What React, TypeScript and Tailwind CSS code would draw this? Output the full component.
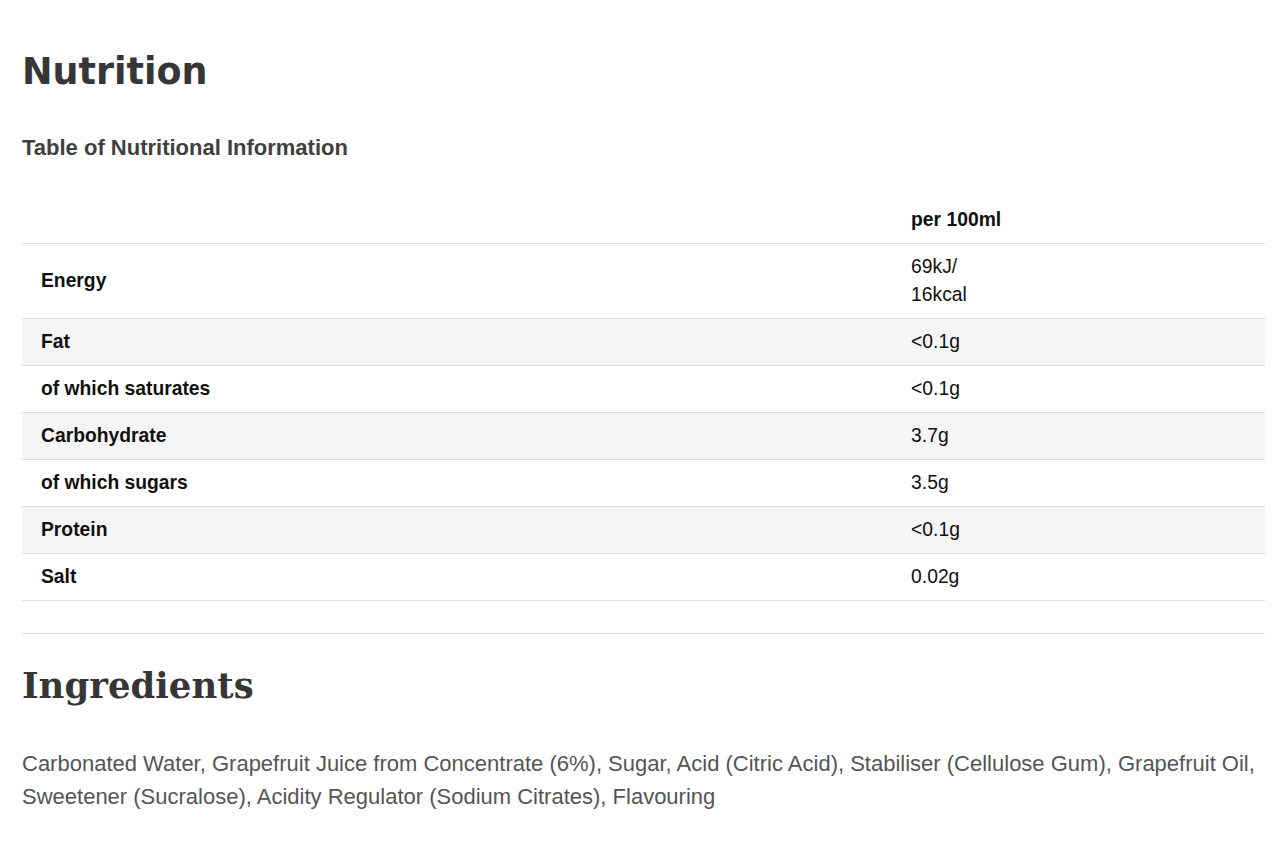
import React from "react";

const rows: { label: string; value: React.ReactNode; shaded: boolean }[] = [
  { label: "Energy", value: (<><div>69kJ/</div><div>16kcal</div></>), shaded: false },
  { label: "Fat", value: "<0.1g", shaded: true },
  { label: "of which saturates", value: "<0.1g", shaded: false },
  { label: "Carbohydrate", value: "3.7g", shaded: true },
  { label: "of which sugars", value: "3.5g", shaded: false },
  { label: "Protein", value: "<0.1g", shaded: true },
  { label: "Salt", value: "0.02g", shaded: false },
];

export default function App() {
  return (
    <div className="min-h-[853px] w-[1280px] bg-white px-[22px] pt-[50px]" style={{ fontFamily: '"Liberation Sans", Arial, sans-serif' }}>
      <h1
        className="text-[36.5px] leading-[44px] font-bold text-[#363636]"
        style={{ fontFamily: '"DejaVu Sans", Verdana, sans-serif' }}
      >
        Nutrition
      </h1>
      <h2 className="mt-[42px] text-[22px] leading-[24px] font-bold text-[#404040]">
        Table of Nutritional Information
      </h2>
      <table className="mt-[37px] w-[1243px] border-collapse text-[19.3px] text-[#111111]">
        <thead>
          <tr className="border-b border-[#dddddd]">
            <th className="w-[70%] py-[9px] pl-[19px] text-left leading-[28px]"></th>
            <th className="py-[9px] pl-[19px] text-left leading-[28px] font-bold">per 100ml</th>
          </tr>
        </thead>
        <tbody>
          {rows.map((r) => (
            <tr key={r.label} className={`border-b border-[#dddddd] ${r.shaded ? "bg-[#f5f5f5]" : "bg-white"}`}>
              <td className="w-[70%] py-[9px] pl-[19px] align-middle leading-[28px] font-bold">{r.label}</td>
              <td className="py-[9px] pl-[19px] align-middle leading-[28px]">{r.value}</td>
            </tr>
          ))}
        </tbody>
      </table>
      <div className="mt-[32px] w-[1243px] border-t border-[#dddddd]"></div>
      <h2
        className="mt-[30px] text-[35.5px] leading-[44px] font-bold text-[#363636]"
        style={{ fontFamily: '"DejaVu Serif", Georgia, serif' }}
      >
        Ingredients
      </h2>
      <p className="mt-[39px] w-[1243px] text-[22px] leading-[33px] text-[#555555]">
        Carbonated Water, Grapefruit Juice from Concentrate (6%), Sugar, Acid (Citric Acid), Stabiliser (Cellulose Gum), Grapefruit Oil, Sweetener (Sucralose), Acidity Regulator (Sodium Citrates), Flavouring
      </p>
    </div>
  );
}
